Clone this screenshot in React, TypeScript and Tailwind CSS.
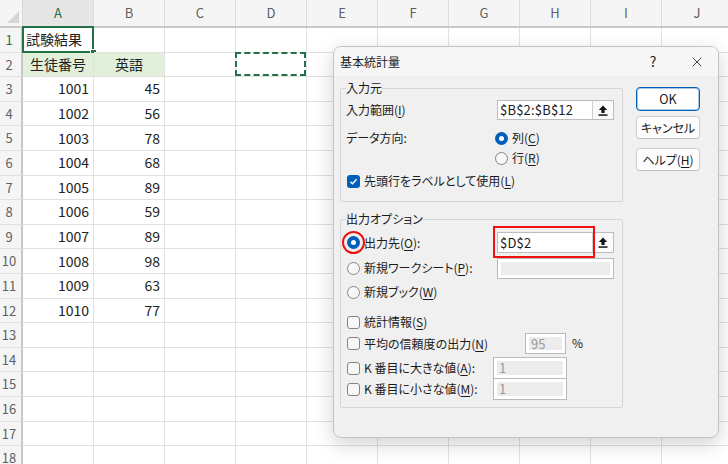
import { X } from "lucide-react";

const COLS = ["A", "B", "C", "D", "E", "F", "G", "H", "I", "J"];

const scores: [string, string][] = [
  ["1001", "45"],
  ["1002", "56"],
  ["1003", "78"],
  ["1004", "68"],
  ["1005", "89"],
  ["1006", "59"],
  ["1007", "89"],
  ["1008", "98"],
  ["1009", "63"],
  ["1010", "77"],
];

const JP = "font-['Noto_Sans_CJK_JP',sans-serif]";

function Cell({ children, className = "" }: { children?: React.ReactNode; className?: string }) {
  return (
    <div className={"relative flex w-[71px] shrink-0 items-center border-r border-b border-[#e1e1e1] " + className}>
      {children}
    </div>
  );
}

function SheetRow({ r }: { r: number }) {
  const score = r >= 3 && r <= 12 ? scores[r - 3] : null;
  return (
    <div className="flex h-[24.6px]">
      <div
        className={
          "flex w-[23px] shrink-0 items-center justify-center border-r-2 border-b border-r-[#c8c8c8] border-b-[#e1e1e1] bg-[#f5f5f5] pr-[3px] text-[13px] " +
          (r === 1 ? "text-[#2c6e49]" : "text-[#616161]")
        }
      >
        {r}
      </div>
      {COLS.map((c) => {
        if (r === 1 && c === "A")
          return (
            <Cell key={c} className="pl-[3px]">
              試験結果
              <div className="absolute -top-[2px] -left-[1px] -right-px -bottom-px border-2 border-[#217346]" />
              <div className="absolute -right-[4px] -bottom-[4px] h-[7px] w-[7px] border border-white bg-[#217346]" />
            </Cell>
          );
        if (r === 2 && c === "A")
          return (
            <Cell key={c} className="justify-center bg-[#e2efda]">
              生徒番号
            </Cell>
          );
        if (r === 2 && c === "B")
          return (
            <Cell key={c} className="justify-center bg-[#e2efda]">
              英語
            </Cell>
          );
        if (r === 2 && c === "D")
          return (
            <Cell key={c}>
              <div className="absolute -top-px -left-px -right-0 -bottom-0 border-2 border-dashed border-[#217346]" />
            </Cell>
          );
        if (score && c === "A")
          return (
            <Cell key={c} className="justify-end pr-[4px]">
              {score[0]}
            </Cell>
          );
        if (score && c === "B")
          return (
            <Cell key={c} className="justify-end pr-[4px]">
              {score[1]}
            </Cell>
          );
        return <Cell key={c} />;
      })}
    </div>
  );
}

function Sheet() {
  return (
    <div className={"h-[464px] w-[728px] overflow-hidden bg-white text-[14px] text-[#222] " + JP}>
      <div className="flex h-[28px] border-b-2 border-[#c8c8c8] bg-[#f5f5f5]">
        <div className="relative w-[23px] shrink-0 border-r border-[#d8d8d8]">
          <svg className="absolute right-[3px] bottom-[3px]" width="12" height="12" viewBox="0 0 12 12">
            <path d="M12 0 V12 H0 Z" fill="#d6d6d6" />
          </svg>
        </div>
        {COLS.map((c) => (
          <div
            key={c}
            className={
              "flex w-[71px] shrink-0 items-center justify-center border-r border-[#dcdcdc] text-[13px] " +
              (c === "A" ? "bg-[#e6e6e6] text-[#2c6e49]" : "text-[#5f5f5f]")
            }
          >
            {c}
          </div>
        ))}
      </div>
      {Array.from({ length: 18 }, (_, i) => (
        <SheetRow key={i} r={i + 1} />
      ))}
    </div>
  );
}

function Radio({ checked = false }: { checked?: boolean }) {
  return checked ? (
    <span className="flex h-[13px] w-[13px] shrink-0 items-center justify-center rounded-full bg-[#005fb8]">
      <span className="h-[5px] w-[5px] rounded-full bg-white" />
    </span>
  ) : (
    <span className="h-[13px] w-[13px] shrink-0 rounded-full border border-[#858585] bg-[#f7f7f7]" />
  );
}

function Check({ checked = false }: { checked?: boolean }) {
  return checked ? (
    <span className="flex h-[13px] w-[13px] shrink-0 items-center justify-center rounded-[3px] bg-[#005fb8]">
      <svg width="9" height="9" viewBox="0 0 9 9">
        <path d="M1.4 4.8 L3.5 6.8 L7.6 2.2" stroke="white" strokeWidth="1.3" fill="none" />
      </svg>
    </span>
  ) : (
    <span className="h-[13px] w-[13px] shrink-0 rounded-[3px] border border-[#858585] bg-[#f7f7f7]" />
  );
}

function UploadIcon() {
  return (
    <svg width="10" height="11" viewBox="0 0 10 11">
      <path d="M5 0.5 L0.8 5 H3.4 V8 H6.6 V5 H9.2 Z" fill="#111" />
      <rect x="0.5" y="9.3" width="9" height="1.5" fill="#111" />
    </svg>
  );
}

function RefInput({ value, className = "" }: { value: string; className?: string }) {
  return (
    <div className={"flex h-[20px] w-[117px] border border-[#bdbdbd] bg-white " + className}>
      <span className="flex flex-1 items-center pl-[2px] text-[13px] tracking-[0.2px]">{value}</span>
      <span className="flex w-[21px] items-center justify-center border-l border-[#cfcfcf] bg-[#fbfbfb]">
        <UploadIcon />
      </span>
    </div>
  );
}

function DisabledInput({ value = "", className = "" }: { value?: string; className?: string }) {
  return (
    <div className={"flex border border-[#b9b9b9] bg-white p-[3px] " + className}>
      <span className="flex flex-1 items-center bg-[#ececec] pl-[2px] text-[13px] text-[#9a9a9a]">{value}</span>
    </div>
  );
}

function Key({ k }: { k: string }) {
  return (
    <>
      (<span className="underline underline-offset-2">{k}</span>)
    </>
  );
}

function Dialog() {
  return (
    <div
      className={
        "absolute top-[46px] left-[333px] flex h-[392px] w-[386px] flex-col overflow-hidden rounded-[8px] border border-[#c4c4c4] bg-[#f0f0f0] text-[12px] text-[#1b1b1b] shadow-[0_6px_20px_rgba(0,0,0,0.18)] [font-feature-settings:'palt'] " +
        JP
      }
    >
      <div className="flex h-[29px] shrink-0 items-center bg-[#f6f6f6]">
        <span className="pl-[6px]">基本統計量</span>
        <span className="ml-auto flex w-[46px] justify-center text-[14px]">?</span>
        <span className="flex w-[42px] justify-center">
          <X size={16} strokeWidth={1.2} />
        </span>
      </div>

      <div className="flex px-[6px] pt-[4px]">
        <div className="w-[283px]">
          <fieldset className="rounded-[2px] border border-[#d6d6d6] px-[5px] pb-[10px]">
            <legend className="leading-[16px]">入力元</legend>
            <div className="mt-[3px] flex h-[22px] items-center">
              <span className="w-[151px]">
                入力範囲<Key k="I" />
              </span>
              <RefInput value="$B$2:$B$12" />
            </div>
            <div className="mt-[7px] flex h-[20px] items-center">
              <span className="w-[149px]">データ方向:</span>
              <Radio checked />
              <span className="ml-[4px]">
                列<Key k="C" />
              </span>
            </div>
            <div className="flex h-[20px] items-center pl-[149px]">
              <Radio />
              <span className="ml-[4px]">
                行<Key k="R" />
              </span>
            </div>
            <div className="mt-[3px] flex h-[20px] items-center pl-px">
              <Check checked />
              <span className="ml-[4px]">
                先頭行をラベルとして使用<Key k="L" />
              </span>
            </div>
          </fieldset>

          <fieldset className="mt-[9px] rounded-[2px] border border-[#d6d6d6] px-[5px] pb-[7px]">
            <legend className="leading-[16px]">出力オプション</legend>
            <div className="mt-[5px] flex h-[21px] items-center">
              <span className="flex w-[151px] items-center pl-px">
                <span className="relative">
                  <Radio checked />
                  <span className="absolute -top-[5px] -left-[5px] h-[23px] w-[23px] rounded-full border-2 border-[#ee1111]" />
                </span>
                <span className="ml-[4px]">
                  出力先<Key k="O" />:
                </span>
              </span>
              <div className="relative">
                <RefInput value="$D$2" className="h-[21px]" />
                <span className="absolute -top-[6px] -bottom-[5px] -left-[4px] right-[19px] border-2 border-[#ee1111]" />
              </div>
            </div>
            <div className="mt-[4px] flex h-[22px] items-center">
              <span className="flex w-[151px] items-center pl-px">
                <Radio />
                <span className="ml-[4px]">
                  新規ワークシート<Key k="P" />:
                </span>
              </span>
              <DisabledInput className="h-[21px] w-[117px]" />
            </div>
            <div className="mt-[3px] flex h-[20px] items-center pl-px">
              <Radio />
              <span className="ml-[4px]">
                新規ブック<Key k="W" />
              </span>
            </div>
            <div className="mt-[10px] flex h-[20px] items-center pl-px">
              <Check />
              <span className="ml-[4px]">
                統計情報<Key k="S" />
              </span>
            </div>
            <div className="mt-px flex h-[21px] items-center">
              <span className="flex w-[179px] items-center pl-px">
                <Check />
                <span className="ml-[4px]">
                  平均の信頼度の出力<Key k="N" />
                </span>
              </span>
              <DisabledInput value="95" className="h-[21px] w-[41px]" />
              <span className="ml-[6px] -mt-[2px]">%</span>
            </div>
            <div className="mt-[3px] flex h-[22px] items-center">
              <span className="flex w-[147px] items-center pl-px">
                <Check />
                <span className="ml-[4px]">
                  K 番目に大きな値<Key k="A" />:
                </span>
              </span>
              <DisabledInput value="1" className="h-[22px] w-[74px]" />
            </div>
            <div className="-mt-px flex h-[22px] items-center">
              <span className="flex w-[147px] items-center pl-px">
                <Check />
                <span className="ml-[4px]">
                  K 番目に小さな値<Key k="M" />:
                </span>
              </span>
              <DisabledInput value="1" className="h-[22px] w-[74px]" />
            </div>
          </fieldset>
        </div>

        <div className="mt-[7px] ml-[13px] flex w-[64px] flex-col">
          <button className="h-[24px] rounded-[4px] border border-[#005fb8] bg-white text-[12.5px] shadow-[inset_0_0_0_1px_rgba(0,95,184,0.35)]">
            OK
          </button>
          <button className="mt-[5px] h-[23px] rounded-[4px] border border-[#d0d0d0] border-b-[#bdbdbd] bg-[#fdfdfd]">
            キャンセル
          </button>
          <button className="mt-[9px] h-[23px] rounded-[4px] border border-[#d0d0d0] border-b-[#bdbdbd] bg-[#fdfdfd]">
            ヘルプ<Key k="H" />
          </button>
        </div>
      </div>
    </div>
  );
}

export default function App() {
  return (
    <div className="relative h-[464px] w-[728px] overflow-hidden bg-white">
      <Sheet />
      <Dialog />
    </div>
  );
}
